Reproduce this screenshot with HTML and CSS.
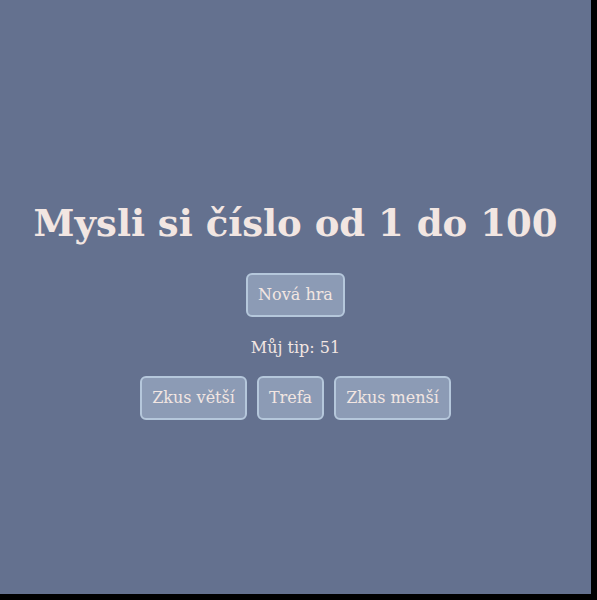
FILE: index.html
```html
<!DOCTYPE html>
<html lang="cs">
<head>
<meta charset="utf-8">
<link rel="stylesheet" href="styles.css">
</head>
<body>
<main class="app">
  <h1 class="title">Mysli si číslo od 1 do 100</h1>
  <button class="btn">Nová hra</button>
  <p class="tip">Můj tip: 51</p>
  <div class="row">
    <button class="btn">Zkus větší</button>
    <button class="btn">Trefa</button>
    <button class="btn">Zkus menší</button>
  </div>
</main>
</body>
</html>
```
FILE: styles.css
```css
html { background: #000; }
body { margin: 0; }
.app {
  width: 591px;
  height: 594px;
  background: #64718f;
  display: flex;
  flex-direction: column;
  align-items: center;
  justify-content: center;
  font-family: "DejaVu Serif", serif;
  color: #f2e6e2;
  padding-top: 26px;
  box-sizing: border-box;
}
.title {
  margin: 0 0 28px;
  font-size: 37px;
  font-weight: bold;
  line-height: 44px;
}
.btn {
  font-family: "DejaVu Serif", serif;
  font-size: 16px;
  color: #f2e6e2;
  background: #8c9bb5;
  border: 2px solid #b5c7db;
  border-radius: 6px;
  height: 44px;
  padding: 0 10px;
}
.tip {
  margin: 19px 0 16px;
  font-size: 16px;
  line-height: 24px;
}
.row {
  display: flex;
  gap: 10px;
}
```
